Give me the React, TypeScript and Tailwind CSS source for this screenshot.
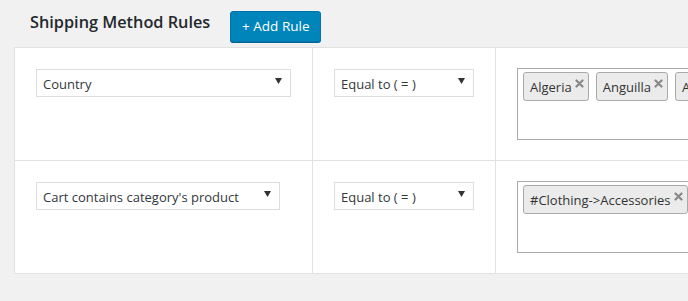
export default function App() {
  const font = { fontFamily: '"Open Sans", "Noto Sans", sans-serif' };
  return (
    <div
      className="w-[688px] h-[301px] overflow-hidden bg-[#f1f1f1] text-[#32373c]"
      style={font}
    >
      {/* Header */}
      <div className="flex items-center pl-[30px] pt-[11px] h-[42px]">
        <h2 className="text-[16.3px] font-semibold text-[#23282d] leading-none -mt-[9px]">
          Shipping Method Rules
        </h2>
        <button className="ml-[20px] self-start h-[31px] w-[91px] rounded-[3px] border border-[#0073aa] bg-[#0085ba] text-white text-[13.5px] shadow-[0_1px_0_#006799]">
          + Add Rule
        </button>
      </div>

      {/* Rules table */}
      <div className="ml-[14px] mt-[5px] w-[900px] border border-[#e1e1e1] bg-white">
        <RuleRow field="Country" fieldWidth="w-[255px]" tags={["Algeria", "Anguilla", "Argentina"]} />
        <RuleRow
          field="Cart contains category's product"
          fieldWidth="w-[244px]"
          tags={["#Clothing->Accessories"]}
          last
        />
      </div>
    </div>
  );
}

function RuleRow({
  field,
  fieldWidth,
  tags,
  last,
}: {
  field: string;
  fieldWidth: string;
  tags: string[];
  last?: boolean;
}) {
  return (
    <div className={`flex ${last ? "h-[112px]" : "h-[113px] border-b border-[#e1e1e1]"}`}>
      <div className="w-[298px] shrink-0 border-r border-[#e1e1e1] pl-[21px] pt-[21px]">
        <Select label={field} width={fieldWidth} />
      </div>
      <div className="w-[183px] shrink-0 border-r border-[#e1e1e1] pl-[21px] pt-[21px]">
        <Select label="Equal to ( = )" width="w-[140px]" />
      </div>
      <div className="flex-1 pl-[21px] pt-[20px]">
        <div className="w-[400px] h-[72px] border border-[#aaaaaa] bg-white pl-[5px] pt-[3px] flex gap-[7px] items-start">
          {tags.map((t) => (
            <span
              key={t}
              className="h-[29px] shrink-0 flex items-start rounded-[3px] border border-[#aaaaaa] bg-[#ebebeb] pl-[6px] pr-[4px] text-[13px] text-[#333]"
            >
              <span className="leading-[29px]">{t}</span>
              <svg width="9" height="9" viewBox="0 0 9 9" className="ml-[3px] mt-[6px]">
                <path d="M1.5 1.5 L7.5 7.5 M7.5 1.5 L1.5 7.5" stroke="#888" strokeWidth="2.2" strokeLinecap="round" />
              </svg>
            </span>
          ))}
        </div>
      </div>
    </div>
  );
}

function Select({ label, width }: { label: string; width: string }) {
  return (
    <div
      className={`${width} h-[28px] border border-[#dddddd] bg-white flex items-center justify-between pl-[6px] pr-[8px]`}
    >
      <span className="pt-[3px] text-[13px] text-[#32373c] whitespace-nowrap">{label}</span>
      <svg width="7" height="6" viewBox="0 0 7 6" className="-mt-[4px]">
        <path d="M0 0 H7 L3.5 6 Z" fill="#333" />
      </svg>
    </div>
  );
}
